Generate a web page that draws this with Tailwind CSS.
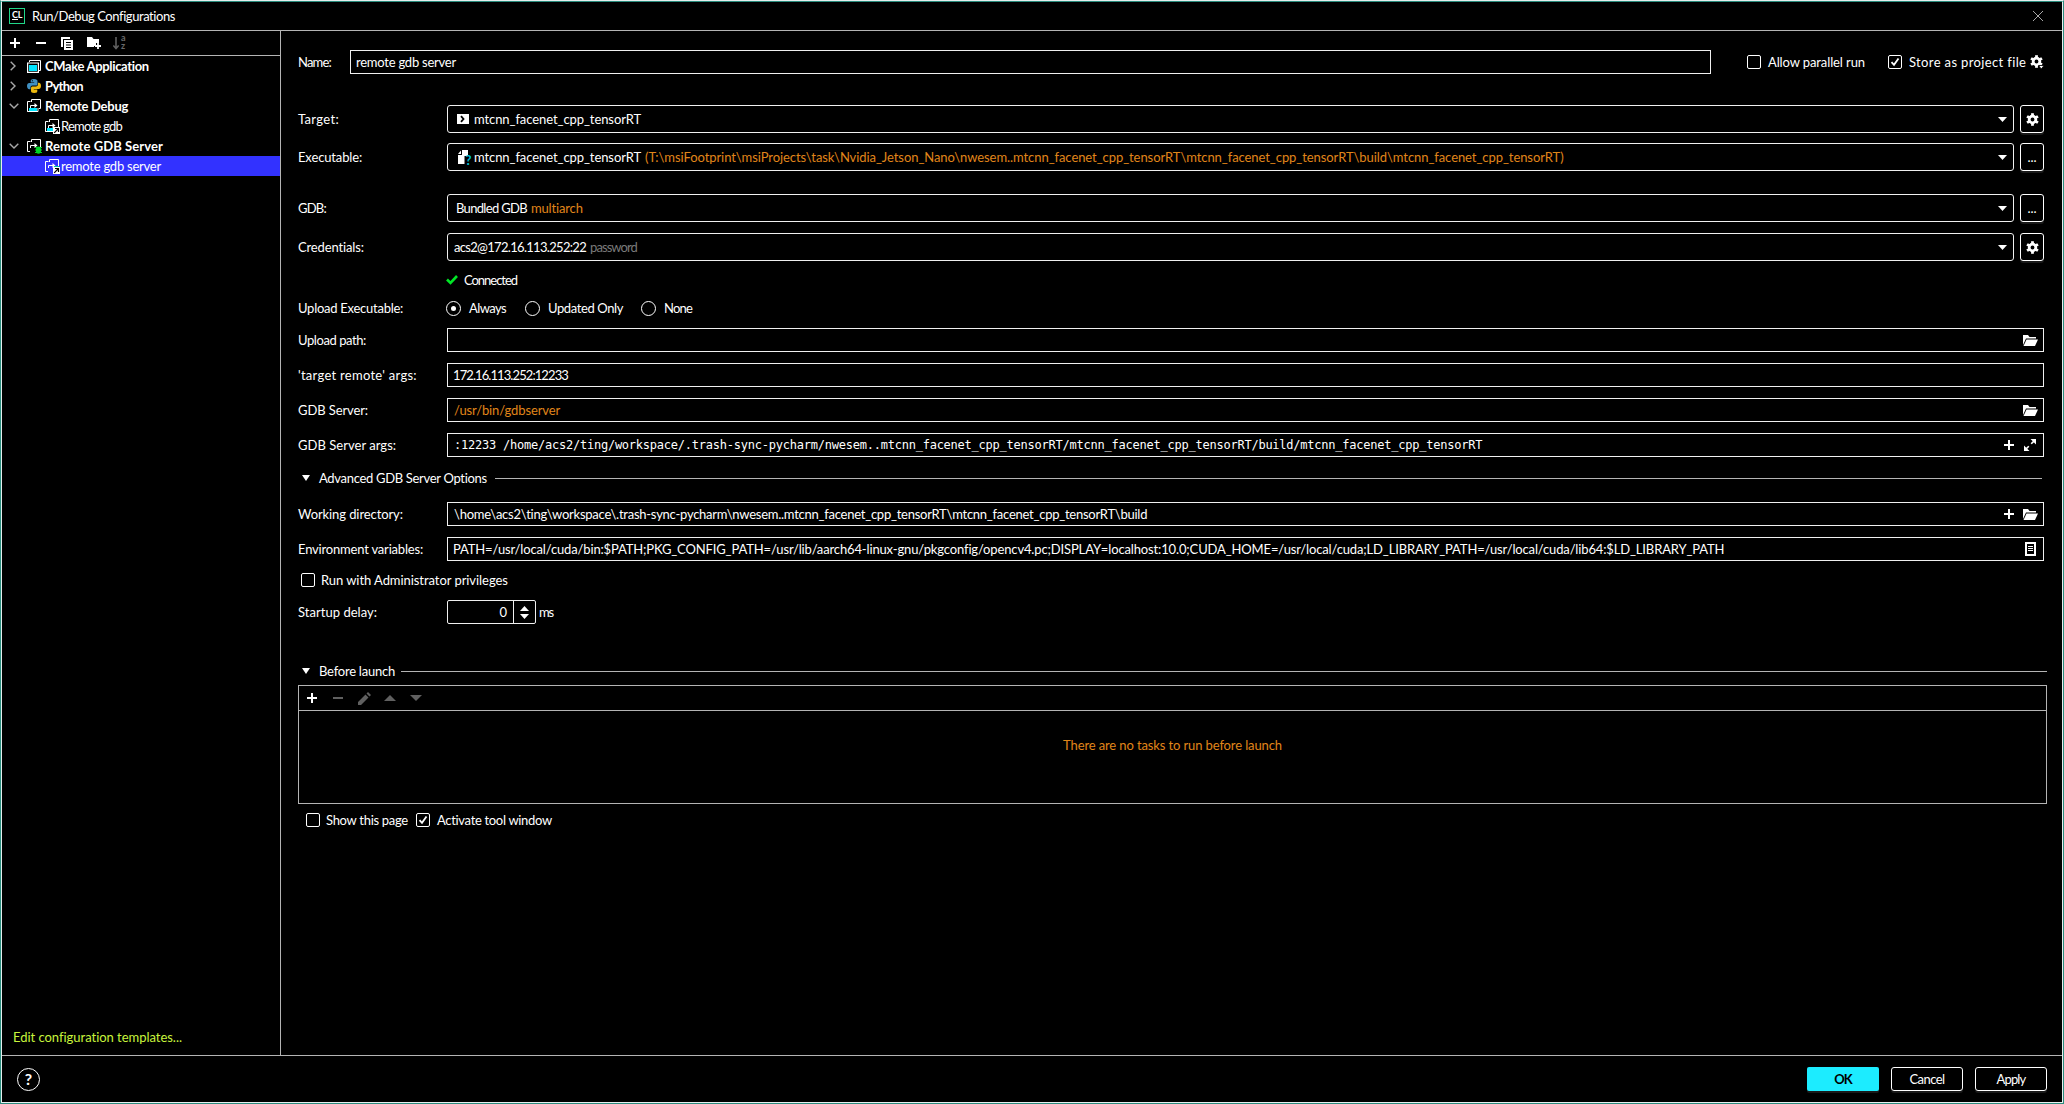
<!DOCTYPE html>
<html lang="en">
<head>
<meta charset="utf-8">
<title>Run/Debug Configurations</title>
<script src="https://cdn.jsdelivr.net/npm/@tailwindcss/browser@4"></script>
</head>
<body class="w-[2064px] h-[1104px] overflow-hidden bg-black text-white font-['Lato',sans-serif] text-[13px] leading-5 whitespace-nowrap">
<svg class="hidden">
  <symbol id="gear" viewBox="0 0 14 14"><circle cx="7" cy="7" r="3.6" fill="none" stroke="#fff" stroke-width="3"/><g fill="#fff"><path id="tooth" d="M5.5.2h3v3.200h-3z"/><use href="#tooth" transform="rotate(60 7 7)"/><use href="#tooth" transform="rotate(120 7 7)"/><use href="#tooth" transform="rotate(180 7 7)"/><use href="#tooth" transform="rotate(240 7 7)"/><use href="#tooth" transform="rotate(300 7 7)"/></g></symbol>
  <symbol id="plus" viewBox="0 0 10 10"><path d="M4 0h2v4h4v2H6v4H4V6H0V4h4z" fill="#fff"/></symbol>
  <symbol id="folder" viewBox="0 0 15 11"><path d="M0 10V0h5l1.500 2H13v1.500H3z" fill="#fff"/><path d="M3.500 4.500H15L12 11H.5z" fill="#fff"/></symbol>
  <symbol id="down" viewBox="0 0 9 5"><path d="M0 0h9L4.500 5z" fill="#fff"/></symbol>
  <symbol id="check" viewBox="0 0 14 14"><path d="M3.500 7.200L6 9.800 10.500 3.500" fill="none" stroke="#fff" stroke-width="1.800"/></symbol>
  <symbol id="right" viewBox="0 0 6 10"><path d="M.7.700L5 5 .7 9.300" fill="none" stroke="#a8a8a8" stroke-width="1.400"/></symbol>
  <symbol id="open" viewBox="0 0 10 6"><path d="M.7.700L5 5 9.300.7" fill="none" stroke="#a8a8a8" stroke-width="1.400"/></symbol>
  <symbol id="remote" viewBox="0 0 15 14"><path d="M4.500 3V.5h9v9H12" fill="none" stroke="#fff"/><path d="M3.500 2.500H.5v10H3M3.500 9V6.500H9" fill="none" stroke="#fff"/><path d="M7.500 4l3 2.500-3 2.500z" fill="#fff"/></symbol>
  <symbol id="short" viewBox="0 0 7 7"><path d="M0 0h7v7H0z" fill="#fff"/><path d="M1.200 5.800L5 2M2 1.500h3.500V5" fill="none" stroke="#000" stroke-width="1.200"/></symbol>
</svg>
<div class="flex h-full flex-col border border-[#2a8c7e] border-t-[#e6efee]">
 <div class="flex flex-1 flex-col border border-[#e6efee] border-t-[#2a8c7e]">
  <header class="flex h-[29px] shrink-0 items-center border-b border-[#b4b4b4] pl-[7px] pr-[19px]">
    <div class="h-4 w-4 shrink-0 border border-[#21d789] bg-black px-[2px] pt-px text-[9px] font-bold leading-[9px] tracking-[-0.2px]">CL<div class="h-px w-[6px] bg-white"></div></div>
    <span class="ml-[7px] tracking-[-0.43px]">Run/Debug Configurations</span>
    <svg class="ml-auto h-[10px] w-[10px]" viewBox="0 0 10 10"><path d="M0 0l10 10M10 0L0 10" stroke="#a8a8a8"/></svg>
  </header>
  <div class="flex h-[1025px] shrink-0 border-b border-[#b4b4b4]">
   <aside class="flex w-[279px] shrink-0 flex-col border-r border-[#b4b4b4]">
    <div class="flex h-[25px] shrink-0 items-center border-b border-[#b4b4b4] pl-2">
      <svg class="h-[10px] w-[10px]"><use href="#plus"/></svg>
      <div class="ml-[16px] h-[2px] w-[10px] bg-white"></div>
      <svg class="ml-[15px] h-[13px] w-[12px]" viewBox="0 0 12 13"><path d="M1 10V1h8" fill="none" stroke="#fff" stroke-width="2"/><path d="M3 3h9v10H3z" fill="#fff"/><path d="M5 5.500h5M5 8h5M5 10.500h5" stroke="#000"/></svg>
      <svg class="ml-[14px] h-[12px] w-[14px]" viewBox="0 0 14 12"><path d="M0 0h5l1.500 2H12v4H9v3H7v1H0z" fill="#fff"/><path d="M11 6v6M8 9h6" stroke="#fff" stroke-width="1.800"/></svg>
      <svg class="ml-[12px] h-[13px] w-[6px]" viewBox="0 0 6 13"><path d="M3 0v11M.3 8.500L3 11.500l2.700-3" fill="none" stroke="#606060" stroke-width="1.600"/></svg>
      <div class="ml-[2px] -mt-[2px] text-[9px] font-bold leading-[8px] text-[#6a6a6a]">a<br>z</div>
    </div>
    <div class="flex h-5 items-center pl-[8px]"><svg class="h-[10px] w-[6px]"><use href="#right"/></svg>
      <svg class="ml-[11px] h-[13px] w-[14px]" viewBox="0 0 14 13"><path d="M2.500 2V.5h11v10H12" fill="none" stroke="#fff"/><path d="M.6 3h10.800v9.400H.6z" fill="none" stroke="#fff" stroke-width="1.200"/><path d="M2 5h8v6H2z" fill="#00e5ff"/></svg>
      <span class="ml-[4px] font-bold tracking-[-0.34px]">CMake Application</span></div>
    <div class="flex h-5 items-center pl-[8px]"><svg class="h-[10px] w-[6px]"><use href="#right"/></svg>
      <svg class="ml-[11px] h-[14px] w-[14px]" viewBox="0 0 14 14"><path d="M6.900 0C4 0 3.700 1 3.700 2v1.500h3.500V4H2.200C1 4 0 5 0 7s1 3.200 2.200 3.200h1.300V8.500c0-1 .8-1.900 2-1.900H9c.9 0 1.500-.7 1.500-1.600V2c0-1-1-2-3.600-2z" fill="#3f8fc0"/><path d="M7.100 14c2.900 0 3.200-1 3.200-2v-1.500H6.800V10h5c1.200 0 2.200-1 2.200-3s-1-3.200-2.200-3.200h-.8v1.700c0 1-.8 1.900-2 1.900H5.500C4.600 7.400 4 8 4 9v3c0 1 .8 2 3.100 2z" fill="#ecb90f"/><path d="M4.900 1.200h1v1h-1z" fill="#000"/></svg>
      <span class="ml-[4px] font-bold tracking-[-0.65px]">Python</span></div>
    <div class="flex h-5 items-center pl-[7px]"><svg class="h-[6px] w-[10px]"><use href="#open"/></svg>
      <svg class="ml-[8px] h-[14px] w-[15px]" viewBox="0 0 15 14"><path d="M2 9h8v3H2z" fill="#00e5ff"/><use href="#remote"/><path d="M.5 12.500h10.500V9" fill="none" stroke="#fff"/></svg>
      <span class="ml-[3px] font-bold tracking-[-0.27px]">Remote Debug</span></div>
    <div class="flex h-5 items-center pl-[43px]">
      <svg class="h-[15px] w-[15px]" viewBox="0 0 15 15"><path d="M2 9h6v3H2z" fill="#00e5ff"/><use href="#remote" width="15" height="14"/><path d="M.5 12.500h7.500" stroke="#fff"/><use href="#short" x="8" y="8" width="7" height="7"/></svg>
      <span class="ml-[1px] tracking-[-0.76px]">Remote gdb</span></div>
    <div class="flex h-5 items-center pl-[7px]"><svg class="h-[6px] w-[10px]"><use href="#open"/></svg>
      <svg class="ml-[8px] h-[15px] w-[15px]" viewBox="0 0 15 15"><use href="#remote" width="15" height="14"/><path d="M8 9h7v6H8z" fill="#000"/><ellipse cx="11.500" cy="11.200" rx="2.600" ry="3.600" fill="#00d326"/><path d="M8 8.500h7M8 11h7M8 13.500h7" stroke="#00d326"/></svg>
      <span class="ml-[3px] font-bold tracking-[0.1px]">Remote GDB Server</span></div>
    <div class="flex h-5 items-center bg-[#3232ff] pl-[43px]">
      <svg class="h-[15px] w-[15px]" viewBox="0 0 15 15"><use href="#remote" width="15" height="14"/><path d="M9 7.500h5" stroke="#00c8a0"/><use href="#short" x="8" y="8" width="7" height="7"/></svg>
      <span class="ml-[1px] tracking-[-0.24px]">remote gdb server</span></div>
    <div class="mt-auto pb-[8px] pl-[11px] tracking-[-0.03px] text-[#c8f53c]">Edit configuration templates...</div>
   </aside>

   <main class="flex-1 pl-[17px]">
    <div class="mt-[19px] flex h-6 items-center">
      <span class="w-[52px] tracking-[-0.8px]">Name:</span>
      <div class="flex h-6 w-[1361px] items-center border border-[#f0f0f0] pl-[5px]"><span class="tracking-[-0.24px]">remote gdb server</span></div>
      <div class="ml-[36px] h-[14px] w-[14px] rounded-[2px] border border-white"></div>
      <span class="ml-[7px] w-[120px] tracking-[-0.11px]">Allow parallel run</span>
      <div class="h-[14px] w-[14px] rounded-[2px] border border-white"><svg class="-m-px h-[14px] w-[14px]"><use href="#check"/></svg></div>
      <span class="ml-[7px] w-[120px] tracking-[0.36px]">Store as project file</span>
      <svg class="ml-px h-[14px] w-[14px]" viewBox="0 0 14 14"><use href="#gear" width="13" height="13"/><path d="M8.500 10.500H14L11.300 14z" fill="#fff" stroke="#000" stroke-width=".8"/></svg>
    </div>
    <div class="mt-[31px] flex h-7 items-center">
      <span class="w-[149px] tracking-[0.34px]">Target:</span>
      <div class="flex h-7 w-[1567px] items-center rounded-[3px] border border-[#f0f0f0] pl-[9px] pr-[6px]">
        <svg class="h-[10px] w-[12px]" viewBox="0 0 12 10"><path d="M0 0h12v10H0z" fill="#fff"/><path d="M4 2.200L6.500 5 4 7.800" fill="none" stroke="#000" stroke-width="1.800"/></svg>
        <span class="ml-[5px] tracking-[-0.08px]">mtcnn_facenet_cpp_tensorRT</span>
        <svg class="ml-auto h-[5px] w-[9px]"><use href="#down"/></svg></div>
      <div class="ml-[6px] flex h-7 w-6 items-center justify-center rounded-[3px] border border-white shadow-[0_2px_0_#1a1a1a]"><svg class="h-[13px] w-[13px]"><use href="#gear"/></svg></div>
    </div>
    <div class="mt-[10px] flex h-7 items-center">
      <span class="w-[149px] tracking-[-0.14px]">Executable:</span>
      <div class="flex h-7 w-[1567px] items-center rounded-[3px] border border-[#f0f0f0] pl-[10px] pr-[6px]">
        <svg class="h-[14px] w-[10px]" viewBox="0 0 10 14"><path d="M4 0h6v6H6.500v8H0V5h4z" fill="#fff"/><path d="M0 4l3-3.500V4z" fill="#fff"/></svg><span class="-ml-[3px] mt-[5px] w-[7px] text-center text-[13px] font-bold leading-[10px] text-[#00c4d8]">?</span>
        <span class="ml-[2px] w-[171px] tracking-[-0.08px]">mtcnn_facenet_cpp_tensorRT</span>
        <span class="tracking-[-0.07px] text-[#e0861a]">(T:\msiFootprint\msiProjects\task\Nvidia_Jetson_Nano\nwesem..mtcnn_facenet_cpp_tensorRT\mtcnn_facenet_cpp_tensorRT\build\mtcnn_facenet_cpp_tensorRT)</span>
        <svg class="ml-auto h-[5px] w-[9px]"><use href="#down"/></svg></div>
      <div class="ml-[6px] flex h-7 w-6 items-center justify-center rounded-[3px] border border-white shadow-[0_2px_0_#1a1a1a]">...</div>
    </div>
    <div class="mt-[23px] flex h-7 items-center">
      <span class="w-[149px] tracking-[-0.76px]">GDB:</span>
      <div class="flex h-7 w-[1567px] items-center rounded-[3px] border border-[#f0f0f0] pl-[8px] pr-[6px]">
        <span class="w-[75px] tracking-[-0.67px]">Bundled GDB</span><span class="tracking-[-0.16px] text-[#e0861a]">multiarch</span>
        <svg class="ml-auto h-[5px] w-[9px]"><use href="#down"/></svg></div>
      <div class="ml-[6px] flex h-7 w-6 items-center justify-center rounded-[3px] border border-white shadow-[0_2px_0_#1a1a1a]">...</div>
    </div>
    <div class="mt-[11px] flex h-7 items-center">
      <span class="w-[149px] tracking-[-0.14px]">Credentials:</span>
      <div class="flex h-7 w-[1567px] items-center rounded-[3px] border border-[#f0f0f0] pl-[6px] pr-[6px]">
        <span class="w-[136px] tracking-[-0.69px]">acs2@172.16.113.252:22</span><span class="tracking-[-0.91px] text-[#7a7a7a]">password</span>
        <svg class="ml-auto h-[5px] w-[9px]"><use href="#down"/></svg></div>
      <div class="ml-[6px] flex h-7 w-6 items-center justify-center rounded-[3px] border border-white shadow-[0_2px_0_#1a1a1a]"><svg class="h-[13px] w-[13px]"><use href="#gear"/></svg></div>
    </div>
    <div class="mt-[9px] flex h-5 items-center pl-[148px]">
      <svg class="h-[10px] w-[12px]" viewBox="0 0 12 10"><path d="M1 4.500L4.500 8 11 1" fill="none" stroke="#00e626" stroke-width="2.600"/></svg>
      <span class="ml-[6px] tracking-[-1.03px]">Connected</span>
    </div>
    <div class="mt-[8px] flex h-5 items-center">
      <span class="w-[148px] tracking-[-0.26px]">Upload Executable:</span>
      <div class="flex h-[15px] w-[15px] items-center justify-center rounded-full border border-white"><div class="h-[5px] w-[5px] rounded-full bg-white"></div></div>
      <span class="ml-[8px] w-[56px] tracking-[-0.58px]">Always</span>
      <div class="h-[15px] w-[15px] rounded-full border border-white"></div>
      <span class="ml-[8px] w-[93px] tracking-[-0.39px]">Updated Only</span>
      <div class="h-[15px] w-[15px] rounded-full border border-white"></div>
      <span class="ml-[8px] tracking-[-0.8px]">None</span>
    </div>
    <div class="mt-[10px] flex h-6 items-center">
      <span class="w-[149px] tracking-[-0.42px]">Upload path:</span>
      <div class="flex h-6 w-[1597px] items-center justify-end border border-[#f0f0f0] pr-[5px]"><svg class="h-[11px] w-[15px]"><use href="#folder"/></svg></div>
    </div>
    <div class="mt-[11px] flex h-6 items-center">
      <span class="w-[149px] tracking-[0.28px]">'target remote' args:</span>
      <div class="flex h-6 w-[1597px] items-center border border-[#f0f0f0] pl-[5px]"><span class="tracking-[-0.91px]">172.16.113.252:12233</span></div>
    </div>
    <div class="mt-[11px] flex h-6 items-center">
      <span class="w-[149px] tracking-[-0.1px]">GDB Server:</span>
      <div class="flex h-6 w-[1597px] items-center border border-[#f0f0f0] pl-[6px] pr-[5px]"><span class="tracking-[-0.11px] text-[#e0861a]">/usr/bin/gdbserver</span><svg class="ml-auto h-[11px] w-[15px]"><use href="#folder"/></svg></div>
    </div>
    <div class="mt-[11px] flex h-6 items-center">
      <span class="w-[149px] tracking-[0.03px]">GDB Server args:</span>
      <div class="flex h-6 w-[1597px] items-center border border-[#f0f0f0] pl-[6px] pr-[7px]"><span class="font-['DejaVu_Sans_Mono',monospace] text-[12px] tracking-[-0.23px]">:12233 /home/acs2/ting/workspace/.trash-sync-pycharm/nwesem..mtcnn_facenet_cpp_tensorRT/mtcnn_facenet_cpp_tensorRT/build/mtcnn_facenet_cpp_tensorRT</span>
        <svg class="ml-auto h-[10px] w-[10px]"><use href="#plus"/></svg>
        <svg class="ml-[10px] h-[12px] w-[12px]" viewBox="0 0 12 12"><path d="M6.500 0H12v5.500zM0 6.500V12h5.500z" fill="#fff"/><path d="M10 2L7.200 4.800M4.800 7.200L2 10" stroke="#fff" stroke-width="1.600"/></svg></div>
    </div>
    <div class="mt-[11px] flex h-5 items-center pl-[4px]">
      <svg class="h-[6px] w-[8px]" viewBox="0 0 9 5" preserveAspectRatio="none"><path d="M0 0h9L4.500 5z" fill="#fff"/></svg>
      <span class="ml-[9px] w-[176px] tracking-[-0.31px]">Advanced GDB Server Options</span>
      <div class="h-px w-[1547px] bg-[#b4b4b4]"></div>
    </div>
    <div class="mt-[14px] flex h-6 items-center">
      <span class="w-[149px] tracking-[-0.09px]">Working directory:</span>
      <div class="flex h-6 w-[1597px] items-center border border-[#f0f0f0] pl-[6px] pr-[5px]"><span class="tracking-[-0.25px]">\home\acs2\ting\workspace\.trash-sync-pycharm\nwesem..mtcnn_facenet_cpp_tensorRT\mtcnn_facenet_cpp_tensorRT\build</span>
        <svg class="ml-auto h-[10px] w-[10px]"><use href="#plus"/></svg><svg class="ml-[9px] h-[11px] w-[15px]"><use href="#folder"/></svg></div>
    </div>
    <div class="mt-[11px] flex h-6 items-center">
      <span class="w-[149px] tracking-[-0.19px]">Environment variables:</span>
      <div class="flex h-6 w-[1597px] items-center border border-[#f0f0f0] pl-[5px] pr-[7px]"><span class="tracking-[-0.14px]">PATH=/usr/local/cuda/bin:$PATH;PKG_CONFIG_PATH=/usr/lib/aarch64-linux-gnu/pkgconfig/opencv4.pc;DISPLAY=localhost:10.0;CUDA_HOME=/usr/local/cuda;LD_LIBRARY_PATH=/usr/local/cuda/lib64:$LD_LIBRARY_PATH</span>
        <svg class="ml-auto h-[14px] w-[11px]" viewBox="0 0 11 14"><path d="M1 1h9v12H1z" fill="none" stroke="#fff" stroke-width="2"/><path d="M3 4.500h5M3 6.500h5M3 8.500h5" stroke="#fff"/></svg></div>
    </div>
    <div class="mt-[9px] flex h-5 items-center pl-[3px]">
      <div class="h-[14px] w-[14px] rounded-[2px] border border-white"></div>
      <span class="ml-[6px] tracking-[-0.06px]">Run with Administrator privileges</span>
    </div>
    <div class="mt-[10px] flex h-6 items-center">
      <span class="w-[149px] tracking-[0.03px]">Startup delay:</span>
      <div class="flex h-6 w-[89px] rounded-[2px] border border-[#f0f0f0]">
        <div class="flex w-[66px] items-center justify-end border-r border-[#f0f0f0] pr-[6px]">0</div>
        <div class="flex flex-1 flex-col items-center justify-center gap-[3px]"><svg class="h-[5px] w-[9px] rotate-180"><use href="#down"/></svg><svg class="h-[5px] w-[9px]"><use href="#down"/></svg></div>
      </div>
      <span class="ml-[3px] tracking-[-1.16px]">ms</span>
    </div>
    <div class="mt-[37px] flex h-5 items-center pl-[4px]">
      <svg class="h-[6px] w-[8px]" viewBox="0 0 9 5" preserveAspectRatio="none"><path d="M0 0h9L4.500 5z" fill="#fff"/></svg>
      <span class="ml-[9px] w-[82px] tracking-[-0.23px]">Before launch</span>
      <div class="h-px w-[1646px] bg-[#b4b4b4]"></div>
    </div>
    <div class="mt-[4px] h-[119px] w-[1749px] border border-[#b4b4b4]">
      <div class="flex h-[25px] items-center border-b border-[#b4b4b4] pl-[8px]">
        <svg class="h-[10px] w-[10px]"><use href="#plus"/></svg>
        <div class="ml-[16px] h-[2px] w-[10px] bg-[#606060]"></div>
        <svg class="ml-[15px] h-[13px] w-[13px]" viewBox="0 0 13 13"><path d="M0 13v-3l7.500-7.500 3 3L3 13zM8.500 1.500L10 0l3 3-1.500 1.500z" fill="#606060"/></svg>
        <svg class="ml-[13px] h-[6px] w-[12px]" viewBox="0 0 12 6"><path d="M0 6h12L6 0z" fill="#606060"/></svg>
        <svg class="ml-[14px] h-[6px] w-[12px]" viewBox="0 0 12 6"><path d="M0 0h12L6 6z" fill="#606060"/></svg>
      </div>
      <div class="pt-[24px] text-center tracking-[-0.12px] text-[#e0861a]">There are no tasks to run before launch</div>
    </div>
    <div class="mt-[6px] flex h-5 items-center pl-[8px]">
      <div class="h-[14px] w-[14px] rounded-[2px] border border-white"></div>
      <span class="ml-[6px] w-[90px] tracking-[-0.29px]">Show this page</span>
      <div class="h-[14px] w-[14px] rounded-[2px] border border-white"><svg class="-m-px h-[14px] w-[14px]"><use href="#check"/></svg></div>
      <span class="ml-[7px] tracking-[-0.32px]">Activate tool window</span>
    </div>
   </main>
  </div>
  <footer class="flex flex-1 items-center pl-[15px] pr-[15px]">
    <div class="flex h-[23px] w-[23px] items-center justify-center rounded-full border border-white text-[16px] font-bold">?</div>
    <div class="ml-auto flex h-6 w-[72px] items-center justify-center rounded-[2px] bg-[#1cecff] font-bold tracking-[-1px] text-black shadow-[0_2px_0_#1a1a1a]">OK</div>
    <div class="ml-[12px] flex h-6 w-[72px] items-center justify-center rounded-[3px] border border-white tracking-[-0.57px] shadow-[0_2px_0_#1a1a1a]">Cancel</div>
    <div class="ml-[12px] flex h-6 w-[72px] items-center justify-center rounded-[3px] border border-white tracking-[-0.82px] shadow-[0_2px_0_#1a1a1a]">Apply</div>
  </footer>
 </div>
</div>
</body>
</html>
